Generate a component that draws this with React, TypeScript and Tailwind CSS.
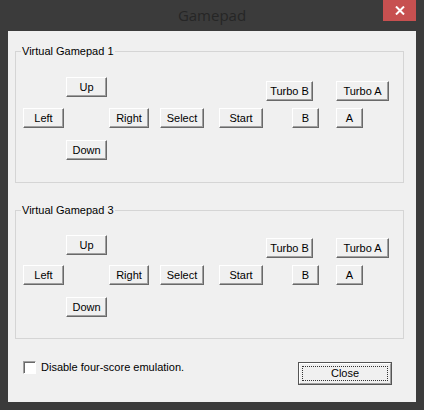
import React from "react"

const font = { fontFamily: '"Liberation Sans", Arial, sans-serif' }

function Btn({ label, w, className = "" }: { label: string; w: string; className?: string }) {
  return (
    <div
      className={`${w} ${className} h-[20px] shrink-0 flex items-center justify-center bg-[#f0f0f0] border border-t-white border-l-white border-r-[#696969] border-b-[#696969] shadow-[inset_-1px_-1px_0_#a0a0a0] text-[11px] text-black leading-none`}
    >
      {label}
    </div>
  )
}

function GroupBox({
  title,
  h,
  className = "",
  topGap,
  turboGap,
}: {
  title: string
  h: string
  className?: string
  topGap: string
  turboGap: string
}) {
  return (
    <div className={`relative ml-[7px] w-[389px] ${h} ${className} border border-[#d5d5d5]`}>
      <span className="absolute left-[5px] -top-[7px] px-[1px] bg-[#f0f0f0] text-[11px] leading-[13px] text-black">
        {title}
      </span>
      {/* top row: Up + turbo buttons */}
      <div className={`flex items-start ${topGap}`}>
        <Btn label="Up" w="w-[41px]" className="ml-[50px]" />
        <Btn label="Turbo B" w="w-[47px]" className={`ml-[159px] ${turboGap}`} />
        <Btn label="Turbo A" w="w-[53px]" className={`ml-[23px] ${turboGap}`} />
      </div>
      {/* middle row */}
      <div className="flex items-start mt-[7px]">
        <Btn label="Left" w="w-[41px]" className="ml-[7px]" />
        <Btn label="Right" w="w-[40px]" className="ml-[45px]" />
        <Btn label="Select" w="w-[44px]" className="ml-[11px]" />
        <Btn label="Start" w="w-[44px]" className="ml-[15px]" />
        <Btn label="B" w="w-[27px]" className="ml-[29px]" />
        <Btn label="A" w="w-[27px]" className="ml-[17px]" />
      </div>
      {/* bottom row */}
      <div className="flex items-start mt-[12px]">
        <Btn label="Down" w="w-[41px]" className="ml-[50px]" />
      </div>
    </div>
  )
}

export default function App() {
  return (
    <div className="w-[424px] h-[410px] bg-[#3b3b3b] flex flex-col overflow-hidden" style={font}>
      {/* Title bar */}
      <div className="relative h-[31px] shrink-0 flex items-start justify-center">
        <span
          className="mt-[5px] text-[15px] leading-[20px] text-[#262626]"
          style={{ fontFamily: '"Open Sans", "Noto Sans", sans-serif' }}
        >
          Gamepad
        </span>
        <div className="absolute right-[8px] top-0 w-[33px] h-[21px] bg-[#c75050] flex items-center justify-center">
          <svg width="10" height="9" viewBox="0 0 10 9">
            <path d="M1 0.5 L9 8.5 M9 0.5 L1 8.5" stroke="white" strokeWidth="2" />
          </svg>
        </div>
      </div>

      {/* Client area */}
      <div className="mx-[8px] h-[371px] bg-[#f0f0f0] flex flex-col">
        <GroupBox title="Virtual Gamepad 1" h="h-[132px]" className="mt-[20px]" topGap="mt-[25px]" turboGap="mt-[4px]" />
        <GroupBox title="Virtual Gamepad 3" h="h-[129px]" className="mt-[27px]" topGap="mt-[24px]" turboGap="mt-[3px]" />

        <div className="flex items-start mt-[22px]">
          <div className="flex items-center ml-[15px]">
            <div className="w-[13px] h-[13px] bg-white border border-t-[#a0a0a0] border-l-[#a0a0a0] border-r-white border-b-white shadow-[inset_1px_1px_0_#696969]" />
            <span className="ml-[5px] text-[11px] leading-[13px] text-black">Disable four-score emulation.</span>
          </div>
          <div className="ml-auto mr-[24px] mt-[1px] w-[94px] h-[23px] border border-[#555] bg-[#f0f0f0]">
            <div className="w-full h-full border border-t-white border-l-white border-r-[#a0a0a0] border-b-[#a0a0a0] p-[2px]">
              <div className="w-full h-full border border-dotted border-[#333] flex items-center justify-center text-[11px] text-black leading-none">
                Close
              </div>
            </div>
          </div>
        </div>
      </div>
    </div>
  )
}
